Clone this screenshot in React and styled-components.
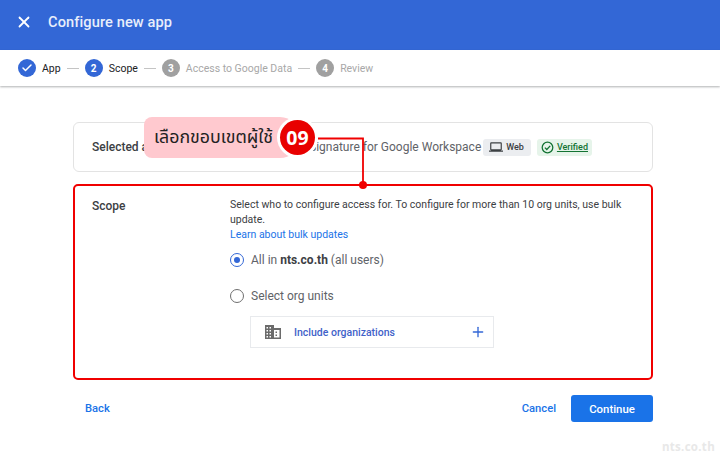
import React from "react";
import styled, { createGlobalStyle } from "styled-components";
import { Check, X, Plus } from "lucide-react";

const Global = createGlobalStyle`
  html, body { margin: 0; padding: 0; background: #fff; }
  body { font-family: Roboto, "Liberation Sans", sans-serif; color: #3c4043; }
`;

const Page = styled.div`
  position: relative;
  width: 720px;
  height: 455px;
  overflow: hidden;
  background: #fff;
`;

const Header = styled.header`
  height: 50px;
  box-sizing: border-box;
  padding: 0 0 6px 15px;
  background: #3367d6;
  display: flex;
  align-items: center;
  gap: 15px;
  color: #fff;
`;

const Title = styled.h1`
  margin: 0;
  font-size: 14.6px;
  font-weight: 500;
  color: #e8eefb;
  letter-spacing: 0.1px;
`;

const Stepper = styled.nav`
  height: 36px;
  display: flex;
  align-items: center;
  padding-left: 18px;
  box-shadow: 0 1px 2px rgba(60, 64, 67, 0.4);
`;

const StepDot = styled.span`
  width: 18px;
  height: 18px;
  border-radius: 50%;
  background: ${(p) => (p.$off ? "#a0a0a0" : "#3367d6")};
  color: #fff;
  font-size: 10px;
  font-weight: 700;
  display: flex;
  align-items: center;
  justify-content: center;
  flex: none;
`;

const StepLabel = styled.span`
  margin-left: 6px;
  font-size: 10.5px;
  color: ${(p) => (p.$off ? "#a8a8a8" : "#202124")};
`;

const StepLine = styled.span`
  width: 12px;
  height: 1px;
  margin: 0 6px;
  background: #c4c4c4;
`;

const Main = styled.main`
  padding: 36px 67px 0 73px;
  display: flex;
  flex-direction: column;
`;

const AppCard = styled.section`
  height: 50px;
  box-sizing: border-box;
  border: 1px solid #e3e3e3;
  border-radius: 6px;
  display: flex;
  align-items: center;
  padding: 0 18px;
`;

const CardLabel = styled.h2`
  margin: 0;
  width: 138px;
  font-size: 12px;
  font-weight: 500;
  color: #3c4043;
  flex: none;
`;

const AppName = styled.span`
  font-size: 12px;
  color: #5f6368;
  white-space: nowrap;
  margin-left: 79px;
`;

const Chip = styled.span`
  display: inline-flex;
  align-items: center;
  gap: 3px;
  height: 17px;
  padding: ${(p) => (p.$ok ? "0 4px" : "0 7px 0 6px")};
  margin-left: ${(p) => (p.$ok ? 6 : 2)}px;
  border-radius: 3px;
  font-size: 9px;
  font-weight: 500;
  background: ${(p) => (p.$ok ? "#e6f4ea" : "#ebedf0")};
  color: ${(p) => (p.$ok ? "#137333" : "#3c4043")};
  text-decoration: ${(p) => (p.$ok ? "underline" : "none")};
`;

const ScopeBox = styled.section`
  margin-top: 12px;
  height: 196px;
  box-sizing: border-box;
  border: 2px solid #f00000;
  border-radius: 5px;
  display: flex;
  padding: 12px 17px 0;
`;

const ScopeLabel = styled(CardLabel)`
  line-height: 16px;
`;

const ScopeBody = styled.div`
  width: 400px;
  flex: none;
  margin-top: -1px;
`;

const Help = styled.p`
  margin: 0;
  font-size: 10.5px;
  line-height: 15px;
  color: #3c4043;
`;

const HelpLink = styled.a`
  display: block;
  color: #1a73e8;
`;

const RadioRow = styled.label`
  display: flex;
  align-items: center;
  gap: 7px;
  height: 20px;
  margin-top: ${(p) => p.$top}px;
  font-size: 12px;
  color: #5f6368;
`;

const Radio = styled.span`
  width: 14px;
  height: 14px;
  box-sizing: border-box;
  border: 1px solid ${(p) => (p.$on ? "#3367d6" : "#6f6f6f")};
  border-radius: 50%;
  display: flex;
  align-items: center;
  justify-content: center;
  &::after {
    content: "";
    width: 6px;
    height: 6px;
    border-radius: 50%;
    background: ${(p) => (p.$on ? "#3367d6" : "transparent")};
  }
`;

const Strong = styled.b`
  font-weight: 700;
  color: #3c4043;
`;

const OrgPicker = styled.div`
  margin: 10px 0 0 20px;
  width: 244px;
  height: 32px;
  box-sizing: border-box;
  border: 1px solid #e8eaed;
  display: flex;
  align-items: center;
  padding: 0 7px 0 14px;
`;

const OrgText = styled.span`
  margin-left: 13px;
  font-size: 10.5px;
  font-weight: 500;
  color: #3f62c9;
  flex: 1;
`;

const Footer = styled.footer`
  margin-top: 15px;
  display: flex;
  align-items: center;
  justify-content: space-between;
`;

const TextButton = styled.button`
  border: 0;
  background: none;
  padding: 0 12px;
  font: 500 11.2px Roboto, sans-serif;
  color: #1a73e8;
`;

const Actions = styled.div`
  display: flex;
  align-items: center;
  gap: 3px;
`;

const Primary = styled.button`
  width: 82px;
  height: 27px;
  border: 0;
  border-radius: 3px;
  background: #1a73e8;
  color: #fff;
  font: 500 11.4px Roboto, sans-serif;
`;

const Callout = styled.div`
  position: absolute;
  left: 144px;
  top: 117px;
  width: 156px;
  height: 41px;
  border-radius: 8px 20px 20px 8px;
  background: #ffc9cf;
  display: flex;
  align-items: center;
  padding-left: 10px;
  box-sizing: border-box;
  font: 17.8px "Noto Sans Thai", "Noto Sans", "DejaVu Sans", sans-serif;
  color: #222;
  white-space: nowrap;
`;

const Badge = styled.span`
  position: absolute;
  left: 280px;
  top: 120px;
  width: 35px;
  height: 35px;
  border-radius: 50%;
  background: #e80000;
  color: #fff;
  font: 700 19.5px "Open Sans", Roboto, sans-serif;
  display: flex;
  align-items: center;
  justify-content: center;
  box-shadow: 0 0 0 3px #fff;
`;

const Connector = styled.svg`
  position: absolute;
  left: 315px;
  top: 130px;
`;

const Watermark = styled.span`
  position: absolute;
  right: 5px;
  bottom: 1px;
  font: 700 11.5px "Open Sans", sans-serif;
  letter-spacing: 0.3px;
  color: #e8e8e8;
`;

const steps = [
  { label: "App", done: true },
  { label: "Scope", n: 2 },
  { label: "Access to Google Data", n: 3, off: true },
  { label: "Review", n: 4, off: true },
];

const BuildingIcon = () => (
  <svg width="16" height="14" viewBox="0 0 16 14" fill="#6b6b6b">
    <path d="M0 0h9v3h7v11H0zM1.5 2v1.5H3V2zm3 0v1.5H6V2zM1.5 5v1.5H3V5zm3 0v1.5H6V5zM1.5 8v1.5H3V8zm3 0v1.5H6V8zm-3 3v1.5H3V11zm3 0v1.5H6V11zM9 5v7.5h5.5V5zm1.5 1.5H12V8h-1.5zm0 3H12V11h-1.5z" fillRule="evenodd" />
  </svg>
);

const LaptopIcon = () => (
  <svg width="14" height="14" viewBox="0 0 24 24" fill="#3c4043">
    <path d="M20 18c1.1 0 2-.9 2-2V6c0-1.1-.9-2-2-2H4c-1.1 0-2 .9-2 2v10c0 1.1.9 2 2 2H0v2h24v-2h-4zM4 6h16v10H4V6z" />
  </svg>
);

const VerifiedIcon = () => (
  <svg width="13" height="13" viewBox="0 0 13 13" fill="none" stroke="#137333" strokeWidth="1.3">
    <circle cx="6.5" cy="6.5" r="5.3" />
    <path d="M3.9 6.6l1.9 1.9 3.4-3.6" />
  </svg>
);

export default function App() {
  return (
    <Page>
      <Global />
      <Header>
        <X size={18} color="#fff" strokeWidth={2.4} />
        <Title>Configure new app</Title>
      </Header>
      <Stepper>
        {steps.map((s, i) => (
          <React.Fragment key={s.label}>
            {i > 0 && <StepLine />}
            <StepDot $off={s.off}>{s.done ? <Check size={12} strokeWidth={3} /> : s.n}</StepDot>
            <StepLabel $off={s.off}>{s.label}</StepLabel>
          </React.Fragment>
        ))}
      </Stepper>
      <Main>
        <AppCard>
          <CardLabel>Selected app</CardLabel>
          <AppName>Signature for Google Workspace</AppName>
          <Chip>
            <LaptopIcon />
            Web
          </Chip>
          <Chip $ok>
            <VerifiedIcon />
            Verified
          </Chip>
        </AppCard>
        <ScopeBox>
          <ScopeLabel>Scope</ScopeLabel>
          <ScopeBody>
            <Help>
              Select who to configure access for. To configure for more than 10 org units, use bulk update.
              <HelpLink>Learn about bulk updates</HelpLink>
            </Help>
            <RadioRow $top={8}>
              <Radio $on />
              <span>
                All in <Strong>nts.co.th</Strong> (all users)
              </span>
            </RadioRow>
            <RadioRow $top={16}>
              <Radio />
              Select org units
            </RadioRow>
            <OrgPicker>
              <BuildingIcon />
              <OrgText>Include organizations</OrgText>
              <Plus size={16} color="#3367d6" strokeWidth={2} />
            </OrgPicker>
          </ScopeBody>
        </ScopeBox>
        <Footer>
          <TextButton>Back</TextButton>
          <Actions>
            <TextButton>Cancel</TextButton>
            <Primary>Continue</Primary>
          </Actions>
        </Footer>
      </Main>
      <Callout>เลือกขอบเขตผู้ใช้</Callout>
      <Connector width="56" height="60" viewBox="0 0 56 60" fill="none">
        <path d="M3 8.5H48V54" stroke="#f00000" strokeWidth="1.8" />
        <circle cx="48" cy="55" r="4" fill="#f00000" />
      </Connector>
      <Badge>09</Badge>
      <Watermark>nts.co.th</Watermark>
    </Page>
  );
}
